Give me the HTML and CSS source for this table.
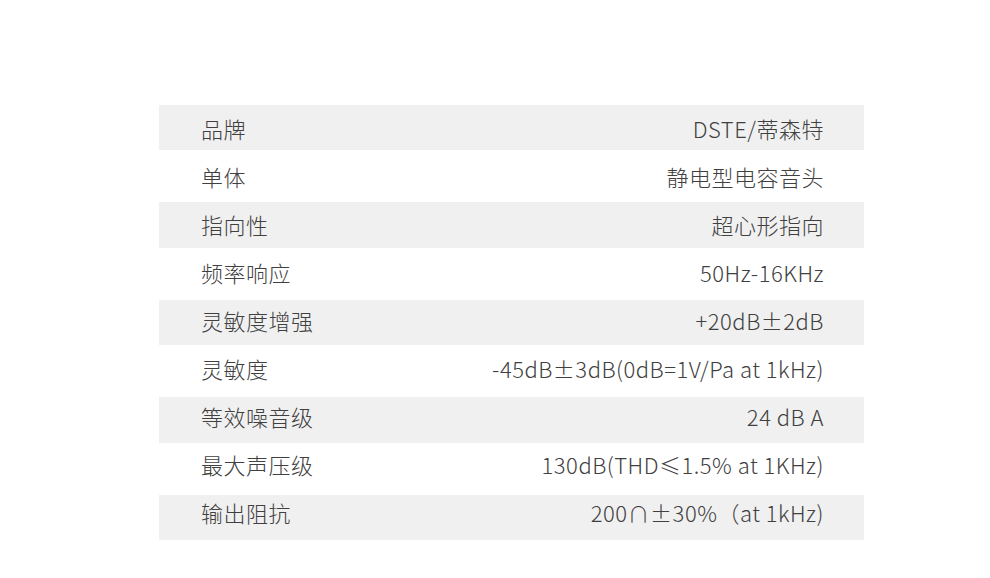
FILE: index.html
```html
<!DOCTYPE html>
<html lang="zh-CN">
<head>
<meta charset="utf-8">
<link rel="stylesheet" href="styles.css">
</head>
<body>
<div class="page">
  <div class="spec">
    <div class="row"><span class="k">品牌</span><span class="v">DSTE/蒂森特</span></div>
    <div class="row"><span class="k">单体</span><span class="v">静电型电容音头</span></div>
    <div class="row"><span class="k">指向性</span><span class="v">超心形指向</span></div>
    <div class="row"><span class="k">频率响应</span><span class="v">50Hz-16KHz</span></div>
    <div class="row"><span class="k">灵敏度增强</span><span class="v">+20dB±2dB</span></div>
    <div class="row"><span class="k">灵敏度</span><span class="v">-45dB±3dB(0dB=1V/Pa at 1kHz)</span></div>
    <div class="row"><span class="k">等效噪音级</span><span class="v">24 dB A</span></div>
    <div class="row"><span class="k">最大声压级</span><span class="v">130dB(THD≤1.5% at 1KHz)</span></div>
    <div class="row"><span class="k">输出阻抗</span><span class="v">200∩±30%（at 1kHz)</span></div>
  </div>
</div>
</body>
</html>
```
FILE: styles.css
```css
html, body {
  margin: 0;
  padding: 0;
  background: #ffffff;
}
.page {
  width: 990px;
  height: 578px;
  padding-top: 105px;
  box-sizing: border-box;
}
.spec {
  width: 705px;
  height: 435.5px;
  margin-left: 159px;
  display: flex;
  flex-direction: column;
  background: repeating-linear-gradient(to bottom, #f0f0f0 0, #f0f0f0 45.5px, #ffffff 45.5px, #ffffff 97.5px);
  font-family: "Noto Sans CJK SC", "Noto Sans", sans-serif;
  font-weight: 300;
  font-size: 22px;
  letter-spacing: 0.5px;
  color: #404040;
}
.row {
  display: flex;
  align-items: center;
  justify-content: space-between;
  padding: 0 40px 3px 42px;
  height: 48px;
  box-sizing: border-box;
  line-height: 1;
  flex-shrink: 0;
}
.k, .v {
  white-space: nowrap;
}
```
